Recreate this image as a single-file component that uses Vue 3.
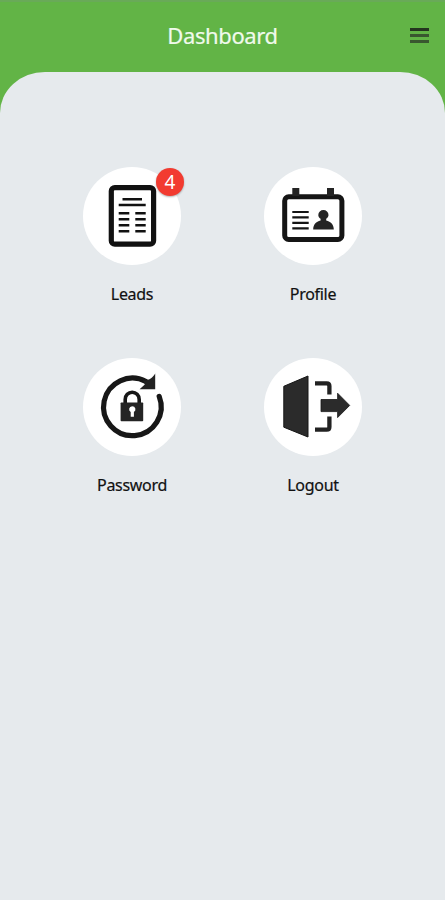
<script setup>
const items = [
  { id: 'leads', label: 'Leads', badge: 4 },
  { id: 'profile', label: 'Profile' },
  { id: 'password', label: 'Password' },
  { id: 'logout', label: 'Logout' },
]
</script>

<template>
  <div class="screen">
    <header class="bar">
      <h1 class="title">Dashboard</h1>
      <button class="menu" aria-label="Menu">
        <span class="line first"></span>
        <span class="line"></span>
        <span class="line"></span>
      </button>
    </header>
    <main class="panel">
      <div class="grid">
        <div v-for="item in items" :key="item.id" class="item">
          <div class="disc">
            <svg v-if="item.id === 'leads'" width="98" height="98" viewBox="0 0 98 98" fill="none" stroke="#111">
              <rect x="28.3" y="20.6" width="42.3" height="56.6" rx="3.5" stroke-width="5.2" />
              <path stroke-width="2.5" d="M39.5 32.3H59M35.7 38H62.7M35.7 46.3H46.3M52.3 46.3H62.7M35.7 52.3H46.3M52.3 52.3H62.7M35.7 58.3H46.3M52.3 58.3H62.7M35.7 64.3H46.3M52.3 64.3H62.7" />
            </svg>
            <svg v-else-if="item.id === 'profile'" width="98" height="98" viewBox="0 0 98 98" fill="none" stroke="#151515">
              <rect x="20.7" y="29.8" width="57.2" height="42.7" rx="4" stroke-width="5" />
              <path fill="#242424" stroke="none" d="M28.3 21h7v8h-7zM63 21h7v8h-7z" />
              <path stroke-width="2.2" d="M28.3 45H44.7M28.3 50.4H44.7M28.3 55.8H44.7M28.3 61.3H44.7" />
              <path fill="#242424" stroke="none" d="M49.2 62.4C49.2 57.5 52 54.6 56.6 53.4V51.8C54.9 50.8 54.3 49.5 54.3 48A5 4.8 0 0 1 64.5 48C64.5 49.5 63.7 50.8 62.2 51.8V53.4C66.8 54.6 69.8 57.5 69.8 62.4Z" />
            </svg>
            <svg v-else-if="item.id === 'password'" width="98" height="98" viewBox="0 0 98 98" fill="none" stroke="#171717">
              <path stroke-width="5.2" stroke-linecap="round" d="M76.2 38.4A28.8 28.8 0 1 1 63 23.5" />
              <path fill="#222" stroke="none" d="M72.2 15.6V31.2H56.6L61.8 26.4L60 22.2C65 23.2 69.4 20.4 72.2 15.6Z" />
              <path stroke-width="3.6" d="M42.2 46V41.4A7 7.2 0 0 1 56.2 41.4V46" />
              <rect x="37.6" y="44.4" width="22.6" height="18.8" rx="0.8" fill="#242424" stroke="none" />
              <path fill="#fff" stroke="none" d="M49.2 48.2a3.4 3.1 0 0 1 1.7 5.7v4.9h-3.2v-4.9a3.4 3.1 0 0 1 1.5-5.7z" />
            </svg>
            <svg v-else width="98" height="98" viewBox="0 0 98 98" fill="#2b2b2b">
              <path stroke="#161616" stroke-width="1" stroke-linejoin="round" d="M19.8 28.3L44 18V79L19.8 69.2Z" />
              <path fill="none" stroke="#222" stroke-width="4.3" d="M51 25.4H62.7Q65.4 25.4 65.4 28.1V36.4M51 71.7H62.7Q65.4 71.7 65.4 69V58.4" />
              <path stroke="#161616" stroke-width="0.8" d="M57 41.5H73.6V35.2L85.7 47.4L73.6 59.6V53.6H57Z" />
            </svg>
            <span v-if="item.badge" class="badge">{{ item.badge }}</span>
          </div>
          <span class="label">{{ item.label }}</span>
        </div>
      </div>
    </main>
  </div>
</template>

<style>
body {
  background: #e6eaed;
}
</style>

<style scoped>
.screen {
  box-sizing: border-box;
  display: flex;
  flex-direction: column;
  height: 900px;
  border-top: 2px solid #69aa58;
  background: linear-gradient(#62b446 0 120px, #e6eaed 120px);
  font-family: "Noto Sans", "Open Sans", sans-serif;
}
.bar {
  box-sizing: border-box;
  display: grid;
  grid-template-columns: 1fr auto 1fr;
  align-items: center;
  height: 70px;
  padding: 0 16px 3px;
}
.title {
  grid-column: 2;
  margin: 0;
  padding-bottom: 2px;
  font-size: 22px;
  line-height: 30px;
  font-weight: 400;
  letter-spacing: -0.4px;
  color: #f0faec;
  -webkit-text-stroke: 0.2px #f0faec;
}
.menu {
  display: flex;
  flex-direction: column;
  gap: 3px;
  justify-self: end;
  width: 19px;
  padding: 0;
  border: 0;
  background: none;
}
.line {
  height: 3px;
  background: #39572f;
}
.first {
  background: #24351f;
}
.panel {
  flex: 1;
  padding-top: 95px;
  border-radius: 45px 45px 0 0 / 41px 41px 0 0;
  background: #e6eaed;
}
.grid {
  display: grid;
  grid-template-columns: 181px 181px;
  grid-auto-rows: 191px;
  justify-content: center;
}
.item {
  display: flex;
  flex-direction: column;
  align-items: center;
}
.disc {
  position: relative;
  width: 98px;
  height: 98px;
  border-radius: 50%;
  background: #fff;
}
.disc svg {
  display: block;
}
.badge {
  position: absolute;
  top: 1px;
  right: -3px;
  width: 28px;
  height: 28px;
  border-radius: 50%;
  background: #f23b30;
  box-shadow: 0 1px 2px rgba(0, 0, 0, 0.3);
  color: #fff;
  font-size: 19px;
  line-height: 28px;
  text-align: center;
}
.label {
  margin-top: 18px;
  font-size: 16px;
  line-height: 22px;
  letter-spacing: -0.3px;
  color: #111;
  -webkit-text-stroke: 0.2px #111;
}
</style>
